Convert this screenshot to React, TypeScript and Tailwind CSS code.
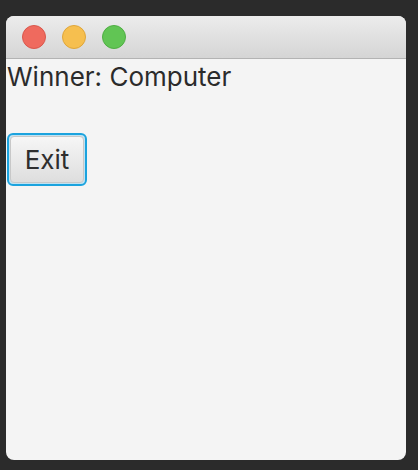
import React from "react";

export default function App() {
  return (
    <div className="w-[418px] h-[470px] bg-[#2b2b2b] pt-[16px] pl-[6px]" style={{ fontFamily: "Inter, 'Helvetica Neue', Arial, sans-serif" }}>
      <div className="w-[400px] h-[444px] rounded-[8px] bg-[#f4f4f4] overflow-hidden flex flex-col">
        <div className="h-[43px] bg-gradient-to-b from-[#ececec] to-[#d5d5d5] border-b border-[#b3b3b3] flex items-center gap-[16px] pl-[16px] shrink-0">
          <div className="w-[24px] h-[24px] rounded-full bg-[#ef6a5e] border border-[#d9574c]" />
          <div className="w-[24px] h-[24px] rounded-full bg-[#f6bf4f] border border-[#dfa63a]" />
          <div className="w-[24px] h-[24px] rounded-full bg-[#61c554] border border-[#4fae43]" />
        </div>
        <div className="pl-[1px] pt-[2px] flex flex-col items-start">
          <div className="text-[26px] leading-[31px] text-[#2b2b2b]">Winner: Computer</div>
          <div className="mt-[41px] rounded-[6px] border-2 border-[#1ba3de] p-[1px] bg-[#bfe2f2]">
            <button className="w-[74px] h-[47px] rounded-[4px] border border-[#c8c8c8] bg-gradient-to-b from-[#f6f6f6] to-[#dedede] text-[26px] text-[#2e2e2e] flex items-center justify-center">
              Exit
            </button>
          </div>
        </div>
      </div>
    </div>
  );
}
